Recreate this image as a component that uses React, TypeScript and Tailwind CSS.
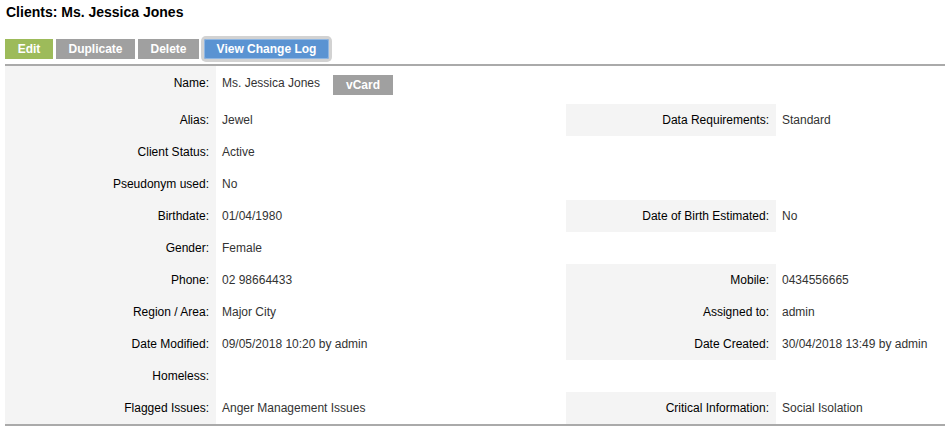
import React from 'react';

type Row = { label: string; value: string; rLabel?: string; rValue?: string };

const rows: Row[] = [
  { label: 'Alias', value: 'Jewel', rLabel: 'Data Requirements', rValue: 'Standard' },
  { label: 'Client Status', value: 'Active' },
  { label: 'Pseudonym used', value: 'No' },
  { label: 'Birthdate', value: '01/04/1980', rLabel: 'Date of Birth Estimated', rValue: 'No' },
  { label: 'Gender', value: 'Female' },
  { label: 'Phone', value: '02 98664433', rLabel: 'Mobile', rValue: '0434556665' },
  { label: 'Region / Area', value: 'Major City', rLabel: 'Assigned to', rValue: 'admin' },
  { label: 'Date Modified', value: '09/05/2018 10:20 by admin', rLabel: 'Date Created', rValue: '30/04/2018 13:49 by admin' },
  { label: 'Homeless', value: '' },
  { label: 'Flagged Issues', value: 'Anger Management Issues', rLabel: 'Critical Information', rValue: 'Social Isolation' },
];

const btn = 'h-[20px] text-center text-white font-bold text-[12px] leading-[20px]';

export default function App() {
  return (
    <div className="w-[945px] h-[426px] overflow-hidden bg-white font-['Liberation_Sans',Arial,sans-serif] text-[12px]">
      <h1 className="pl-[6px] pt-[4px] text-[14px] font-bold leading-[16px] text-black">Clients: Ms. Jessica Jones</h1>

      <div className="ml-[5px] mt-[19px] flex">
        <div className={`${btn} w-[48px] bg-[#9dbb5a]`}>Edit</div>
        <div className={`${btn} ml-[3px] w-[79px] bg-[#a0a0a0]`}>Duplicate</div>
        <div className={`${btn} ml-[3px] w-[61px] bg-[#a0a0a0]`}>Delete</div>
        <div className={`${btn} ml-[5px] w-[125px] bg-[#5a93d2] outline outline-1 outline-[#8fb6e2] -outline-offset-1 shadow-[0_0_0_3px_#d2d2d2] rounded-[2px]`}>
          View Change Log
        </div>
      </div>

      <div className="ml-[5px] mt-[5px] border-t-2 border-b-2 border-[#aaaaaa]">
        <div className="grid grid-cols-[211px_350px_210px_1fr] h-[38px] leading-[16px]">
          <div className="bg-[#f4f4f4] pr-[7px] pt-[9px] text-right text-black">Name:</div>
          <div className="pl-[6px] pt-[9px] flex items-start text-[#333]">
            <span>Ms. Jessica Jones</span>
            <span className="ml-[13px] w-[60px] h-[20px] bg-[#a0a0a0] text-white font-bold text-center leading-[20px]">vCard</span>
          </div>
          <div />
          <div />
        </div>
        {rows.map((r) => (
          <div key={r.label} className="grid grid-cols-[211px_350px_210px_1fr] h-[32px] leading-[16px]">
            <div className="bg-[#f4f4f4] pr-[7px] flex items-center justify-end text-black">{r.label}:</div>
            <div className="pl-[6px] flex items-center text-[#333]">{r.value}</div>
            {r.rLabel ? (
              <div className="bg-[#f4f4f4] pr-[7px] flex items-center justify-end text-black">{r.rLabel}:</div>
            ) : (
              <div />
            )}
            <div className="pl-[6px] flex items-center text-[#333] whitespace-nowrap">{r.rValue ?? ''}</div>
          </div>
        ))}
      </div>
    </div>
  );
}
